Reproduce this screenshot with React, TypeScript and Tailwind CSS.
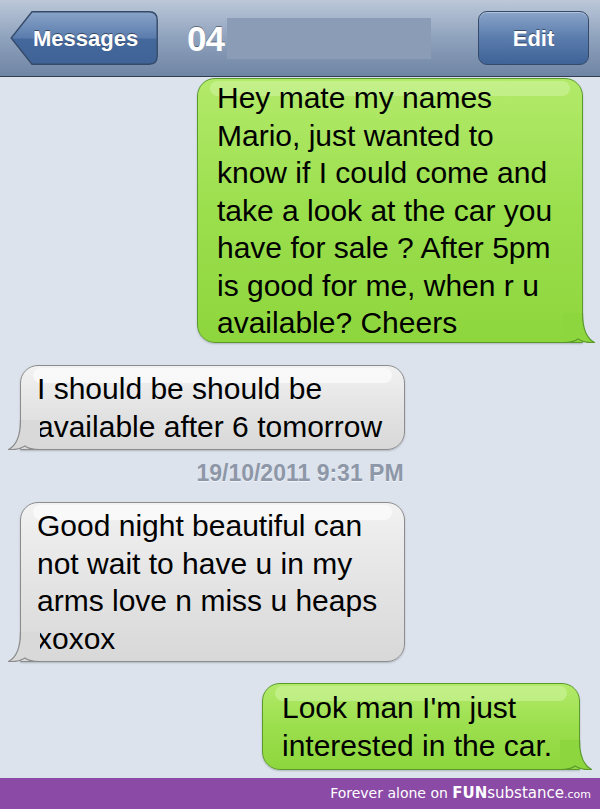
import type { ReactNode } from "react";

const font = { fontFamily: '"Liberation Sans", Arial, Helvetica, sans-serif' };

// bubble tail; svg x=20 is the bubble's outer edge, y=30 its outer bottom
function Tail({ side, fill, stroke }: { side: "left" | "right"; fill: string; stroke: string }) {
  return (
    <svg
      width="32"
      height="30"
      viewBox="0 0 32 30"
      className={
        side === "right"
          ? "absolute right-[-13px] bottom-[-1px]"
          : "absolute left-[-13px] bottom-[-1px] scale-x-[-1]"
      }
    >
      <path
        d="M0,0 H19.5 C19.5,16 23,25 31.5,29.6 C25,30 19,28.5 15,26 C12,28.5 8,29.5 2,29.5 H0 Z"
        fill={fill}
      />
      <path
        d="M19.5,0 C19.5,16 23,25 31.5,29.6 C25,30 19,28.5 15,26 C12,28.5 8,29.5 0,29.5"
        fill="none"
        stroke={stroke}
        strokeWidth="1.2"
      />
    </svg>
  );
}

function Bubble({
  mine,
  lines,
  className,
}: {
  mine?: boolean;
  lines: string[];
  className: string;
}) {
  return (
    <div
      className={
        "relative rounded-[18px] border shadow-[0_1px_2px_rgba(0,0,0,0.2)] " +
        (mine
          ? "rounded-br-none border-[#5a9a2c] bg-linear-to-b from-[#b3ea6a] via-[#9bdf4d] to-[#8ed63d] " +
            className
          : "rounded-bl-none border-[#8c8c8c] bg-linear-to-b from-[#f2f2f2] via-[#e4e4e4] to-[#d8d8d8] " +
            className)
      }
    >
      <div
        className={
          "absolute top-[2px] left-[12px] right-[12px] h-[15px] rounded-full " +
          (mine ? "bg-[#d4f7a8]/50" : "bg-white/60")
        }
      />
      <div className="relative text-[30px] leading-[37.5px] text-black whitespace-nowrap">
        {lines.map((l, i) => (
          <div key={i}>{l}</div>
        ))}
      </div>
      <Tail
        side={mine ? "right" : "left"}
        fill={mine ? "#8ed63d" : "#d9d9d9"}
        stroke={mine ? "#5a9a2c" : "#8c8c8c"}
      />
    </div>
  );
}

function NavButton({ children, back }: { children: ReactNode; back?: boolean }) {
  if (back) {
    return (
      <div className="relative w-[148px] h-[54px] flex items-center">
        <svg width="148" height="54" viewBox="0 0 148 54" className="absolute inset-0">
          <defs>
            <linearGradient id="nb" x1="0" y1="0" x2="0" y2="1">
              <stop offset="0" stopColor="#8aa4c8" />
              <stop offset="0.5" stopColor="#5a7cad" />
              <stop offset="0.52" stopColor="#45689c" />
              <stop offset="1" stopColor="#3f6397" />
            </linearGradient>
          </defs>
          <path
            d="M22,0.8 H139 Q147.2,0.8 147.2,9 V45 Q147.2,53.2 139,53.2 H22 L1.2,27 Z"
            fill="url(#nb)"
            stroke="#354a68"
            strokeWidth="1.4"
          />
        </svg>
        <span className="relative pl-[23px] text-[22px] font-bold text-white [text-shadow:0_-1px_0_rgba(0,0,0,0.45)]">
          {children}
        </span>
      </div>
    );
  }
  return (
    <div className="w-[111px] h-[54px] rounded-[9px] border border-[#354a68] bg-linear-to-b from-[#8aa4c8] via-[#5a7cad] to-[#3f6397] flex items-center justify-center shadow-[inset_0_1px_0_rgba(255,255,255,0.35)]">
      <span className="text-[22px] font-bold text-white [text-shadow:0_-1px_0_rgba(0,0,0,0.45)]">
        {children}
      </span>
    </div>
  );
}

export default function App() {
  return (
    <div className="w-[600px] h-[809px] flex flex-col overflow-hidden bg-[#dce3ed]" style={font}>
      <header className="h-[77px] shrink-0 flex items-center px-[10px] border-b border-[#2f3d52] bg-linear-to-b from-[#bcc8d9] via-[#8fa2bd] to-[#6f85a4]">
        <NavButton back>Messages</NavButton>
        <div className="ml-[29px] flex items-center">
          <span className="text-[35px] font-bold text-white leading-none tracking-[-1px] [text-shadow:0_-1px_0_rgba(0,0,0,0.4)]">
            04
          </span>
          <div className="ml-[3px] w-[204px] h-[41px] bg-[#8a9cb6]" />
        </div>
        <div className="ml-auto mr-[1px]">
          <NavButton>Edit</NavButton>
        </div>
      </header>

      <main className="flex-1 flex flex-col">
        <Bubble
          mine
          className="self-end mr-[17px] mt-[1px] w-[386px] h-[265px] pl-[19px]"
          lines={[
            "Hey mate my names",
            "Mario, just wanted to",
            "know if I could come and",
            "take a look at the car you",
            "have for sale ? After 5pm",
            "is good for me, when r u",
            "available? Cheers",
          ]}
        />
        <Bubble
          className="ml-[20px] mt-[22px] w-[385px] h-[85px] pl-[16px] pt-[4px]"
          lines={["I should be should be", "available after 6 tomorrow"]}
        />
        <div className="mt-[10px] text-center text-[23px] font-bold text-[#8d97a7] leading-[26px] [text-shadow:0_1px_0_rgba(255,255,255,0.6)]">
          19/10/2011 9:31 PM
        </div>
        <Bubble
          className="ml-[20px] mt-[16px] w-[385px] h-[160px] pl-[16px] pt-[4px]"
          lines={[
            "Good night beautiful can",
            "not wait to have u in my",
            "arms love n miss u heaps",
            "xoxox",
          ]}
        />
        <Bubble
          mine
          className="self-end mr-[20px] mt-[21px] w-[318px] h-[87px] pl-[19px] pt-[5px]"
          lines={["Look man I'm just", "interested in the car."]}
        />
      </main>

      <footer className="h-[31px] shrink-0 bg-[#8b4aa6] flex items-center justify-end pr-[9px]">
        <span
          className="text-[14px] text-white"
          style={{ fontFamily: '"DejaVu Sans", Verdana, sans-serif' }}
        >
          Forever alone on <span className="font-bold text-[15px]">FUN</span>
          <span className="text-[15px]">substance</span>
          <span className="text-[11px]">.com</span>
        </span>
      </footer>
    </div>
  );
}
